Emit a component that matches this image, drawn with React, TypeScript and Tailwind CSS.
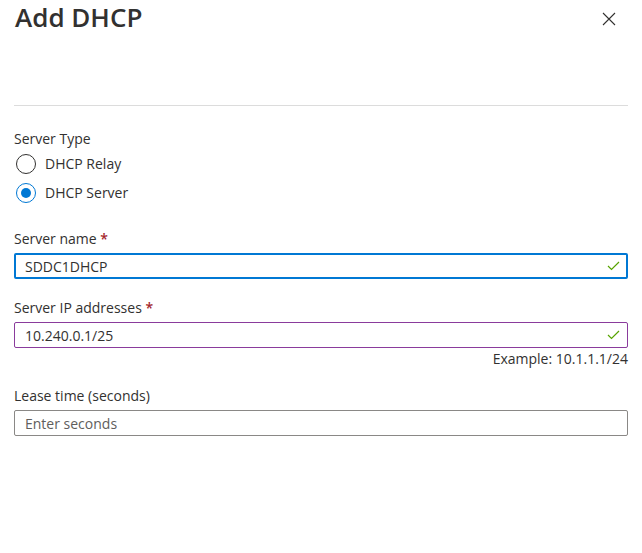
import React, { useState } from 'react';

const Check = () => (
  <svg width="13" height="10" viewBox="0 0 13 10" className="shrink-0">
    <polyline points="1,5 4.5,8.5 12,1" fill="none" stroke="#57a300" strokeWidth="1.2" />
  </svg>
);

const Radio = ({ checked, label, onClick }: { checked: boolean; label: string; onClick: () => void }) => (
  <div onClick={onClick} className="flex items-center h-[29px] cursor-pointer">
    <span
      className={`ml-[2px] w-[20px] h-[20px] rounded-full border flex items-center justify-center ${
        checked ? 'border-[#0078d4]' : 'border-[#323130]'
      }`}
    >
      {checked && <span className="w-[10px] h-[10px] rounded-full bg-[#0078d4]" />}
    </span>
    <span className="ml-[9px] text-[14px] leading-[20px] text-[#323130]">{label}</span>
  </div>
);

export default function App() {
  const [serverType, setServerType] = useState<'relay' | 'server'>('server');

  return (
    <div
      className="w-[642px] h-[553px] bg-white overflow-hidden"
      style={{ fontFamily: '"Open Sans", "Noto Sans", sans-serif' }}
    >
      {/* Header */}
      <div className="flex items-start justify-between pl-[15px] pr-[26px]">
        <h1 className="text-[26px] leading-[34px] font-semibold text-[#323130]">Add DHCP</h1>
        <button className="mt-[12px]" title="Close">
          <svg width="14" height="14" viewBox="0 0 14 14">
            <path d="M1 1 L13 13 M13 1 L1 13" stroke="#323130" strokeWidth="1.1" fill="none" />
          </svg>
        </button>
      </div>

      <div className="mx-[14px] mt-[71px] border-t border-[#dcdcdc]" />

      {/* Form */}
      <div className="px-[14px] flex flex-col">
        <div className="mt-[23px] text-[14px] leading-[20px] text-[#323130]">Server Type</div>
        <Radio checked={serverType === 'relay'} label="DHCP Relay" onClick={() => setServerType('relay')} />
        <Radio checked={serverType === 'server'} label="DHCP Server" onClick={() => setServerType('server')} />

        <div className="mt-[22px] text-[14px] leading-[20px] text-[#323130]">
          Server name <span className="text-[#a4262c] font-semibold">*</span>
        </div>
        <div className="mt-[4px] h-[26px] border-2 border-[#0078d4] rounded-[2px] flex items-center pl-[9px] pr-[6px]">
          <span className="flex-1 text-[14px] text-[#323130]">SDDC1DHCP</span>
          <Check />
        </div>

        <div className="mt-[19px] text-[14px] leading-[20px] text-[#323130]">
          Server IP addresses <span className="text-[#a4262c] font-semibold">*</span>
        </div>
        <div className="mt-[4px] h-[26px] border border-[#8a3b9c] rounded-[2px] flex items-center pl-[10px] pr-[7px]">
          <span className="flex-1 text-[14px] text-[#323130]">10.240.0.1/25</span>
          <Check />
        </div>
        <div className="mt-[1px] text-right text-[14px] leading-[20px] text-[#323130]">Example: 10.1.1.1/24</div>

        <div className="mt-[17px] text-[14px] leading-[20px] text-[#323130]">Lease time (seconds)</div>
        <div className="mt-[4px] h-[26px] border border-[#8a8886] rounded-[2px] flex items-center pl-[10px]">
          <span className="text-[14px] text-[#605e5c]">Enter seconds</span>
        </div>
      </div>
    </div>
  );
}
